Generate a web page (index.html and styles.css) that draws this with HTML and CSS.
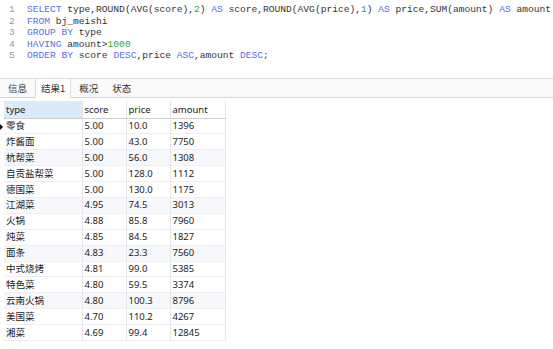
FILE: index.html
```html
<!DOCTYPE html>
<html lang="zh-CN">

<head>
    <meta charset="UTF-8">
    <meta name="viewport" content="width=device-width, initial-scale=1.0">
    <title>查询结果</title>
    <link rel="stylesheet" href="styles.css">
</head>

<body>
    <div class="editor">
        <div class="line"><span class="num">1</span><span class="code"><span class="kw">SELECT</span> type,ROUND(AVG(score),<span class="n">2</span>) <span class="kw">AS</span> score,ROUND(AVG(price),<span class="n">1</span>) <span class="kw">AS</span> price,SUM(amount) <span class="kw">AS</span> amount</span></div>
        <div class="line"><span class="num">2</span><span class="code"><span class="kw">FROM</span> bj_meishi</span></div>
        <div class="line"><span class="num">3</span><span class="code"><span class="kw">GROUP BY</span> type</span></div>
        <div class="line"><span class="num">4</span><span class="code"><span class="kw">HAVING</span> amount&gt;<span class="n">1000</span></span></div>
        <div class="line"><span class="num">5</span><span class="code"><span class="kw">ORDER BY</span> score <span class="kw">DESC</span>,price <span class="kw">ASC</span>,amount <span class="kw">DESC</span>;</span></div>
    </div>

    <div class="tabs">
        <div class="tab">信息</div>
        <div class="tab active">结果1</div>
        <div class="tab">概况</div>
        <div class="tab">状态</div>
    </div>

    <div class="result">
        <table class="grid">
            <thead>
                <tr><th class="sel">type</th><th>score</th><th>price</th><th>amount</th></tr>
            </thead>
            <tbody>
                <tr><td class="cur">零食</td><td>5.00</td><td>10.0</td><td>1396</td></tr>
                <tr><td>炸酱面</td><td>5.00</td><td>43.0</td><td>7750</td></tr>
                <tr><td>杭帮菜</td><td>5.00</td><td>56.0</td><td>1308</td></tr>
                <tr><td>自贡盐帮菜</td><td>5.00</td><td>128.0</td><td>1112</td></tr>
                <tr><td>德国菜</td><td>5.00</td><td>130.0</td><td>1175</td></tr>
                <tr><td>江湖菜</td><td>4.95</td><td>74.5</td><td>3013</td></tr>
                <tr><td>火锅</td><td>4.88</td><td>85.8</td><td>7960</td></tr>
                <tr><td>炖菜</td><td>4.85</td><td>84.5</td><td>1827</td></tr>
                <tr><td>面条</td><td>4.83</td><td>23.3</td><td>7560</td></tr>
                <tr><td>中式烧烤</td><td>4.81</td><td>99.0</td><td>5385</td></tr>
                <tr><td>特色菜</td><td>4.80</td><td>59.5</td><td>3374</td></tr>
                <tr><td>云南火锅</td><td>4.80</td><td>100.3</td><td>8796</td></tr>
                <tr><td>美国菜</td><td>4.70</td><td>110.2</td><td>4267</td></tr>
                <tr><td>湘菜</td><td>4.69</td><td>99.4</td><td>12845</td></tr>
            </tbody>
        </table>
    </div>
</body>

</html>
```

FILE: styles.css
```css
* {
    margin: 0;
    padding: 0;
    box-sizing: border-box;
}

body {
    width: 553px;
    height: 349px;
    overflow: hidden;
    background-color: #FFF;
    font-family: "Noto Sans", "Noto Sans CJK SC", sans-serif;
    color: #222;
}

.editor {
    height: 79px;
    padding-top: 4px;
    border-bottom: 1px solid #DADADA;
    font-family: "Liberation Mono", monospace;
    font-size: 9.6px;
    color: #333;
}

.line {
    display: flex;
    height: 11.5px;
    line-height: 11.5px;
}

.num {
    width: 27px;
    padding-left: 9px;
    color: #999;
}

.code {
    white-space: pre;
}

.kw {
    color: #5C6FE0;
}

.n {
    color: #3E9F3E;
}

.tabs {
    display: flex;
    height: 19px;
    padding-left: 2px;
    background-color: #FAFAFA;
    border-bottom: 1px solid #D6D6D6;
    font-family: "Noto Sans CJK SC", sans-serif;
    font-size: 9.5px;
}

.tab {
    padding: 0 6px;
    line-height: 18px;
    color: #333;
}

.tab.active {
    background-color: #FFF;
    border: 1px solid #DCDCDC;
    border-bottom: none;
    margin-top: -1px;
    line-height: 19px;
    height: 20px;
    padding: 0 5px;
}

.tab + .tab {
    margin-left: 2px;
}

.result {
    padding: 3px 0 0 4px;
}

.grid {
    border-collapse: collapse;
    font-size: 9.5px;
    border-right: 1px solid #E2E2E2;
}

.grid th,
.grid td {
    padding: 0 0 0 2px;
    text-align: left;
    font-weight: normal;
    border-right: 1px solid #E6E6E6;
    border-bottom: 1px solid #EFEFEF;
    white-space: nowrap;
    color: #222;
}

.grid td {
    height: 15.9px;
    line-height: 14px;
}

.grid th {
    height: 17px;
    border-bottom: 1px solid #CFCFCF;
}

.grid th:nth-child(1) { width: 78px; }
.grid th:nth-child(2) { width: 44px; }
.grid th:nth-child(3) { width: 44px; }
.grid th:nth-child(4) { width: 55px; }

.grid th.sel {
    background-color: #DCEBFA;
}

.grid tbody tr:nth-child(3n) {
    background-color: #F6F8FB;
}

.grid td.cur {
    position: relative;
}

.grid td.cur::before {
    content: "";
    position: absolute;
    left: -5px;
    top: 4px;
    border-left: 4px solid #111;
    border-top: 4px solid transparent;
    border-bottom: 4px solid transparent;
}
```
